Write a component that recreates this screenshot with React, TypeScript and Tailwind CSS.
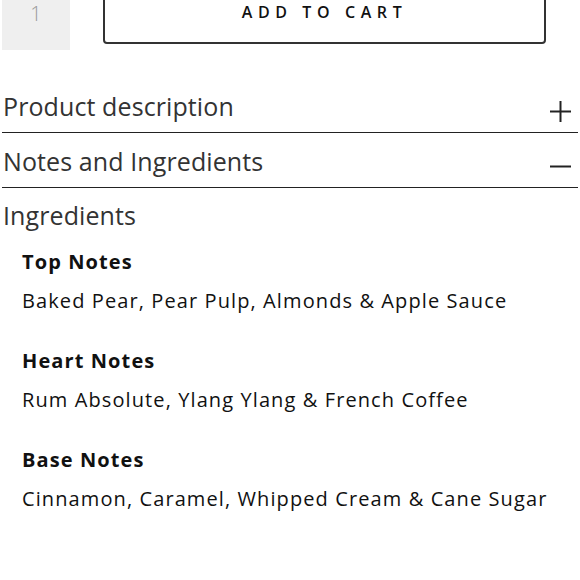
import React from 'react';

const notes = [
  { title: 'Top Notes', text: 'Baked Pear, Pear Pulp, Almonds & Apple Sauce' },
  { title: 'Heart Notes', text: 'Rum Absolute, Ylang Ylang & French Coffee' },
  { title: 'Base Notes', text: 'Cinnamon, Caramel, Whipped Cream & Cane Sugar' },
];

function Plus() {
  return (
    <svg width="21" height="21" viewBox="0 0 21 21" fill="none" stroke="#222" strokeWidth="2">
      <line x1="0" y1="10.5" x2="21" y2="10.5" />
      <line x1="10.5" y1="0" x2="10.5" y2="21" />
    </svg>
  );
}

function Minus() {
  return (
    <svg width="21" height="21" viewBox="0 0 21 21" fill="none" stroke="#222" strokeWidth="2">
      <line x1="0" y1="10.5" x2="21" y2="10.5" />
    </svg>
  );
}

export default function App() {
  return (
    <div
      className="w-[580px] h-[580px] overflow-hidden bg-white"
      style={{ fontFamily: '"Open Sans", "Liberation Sans", sans-serif' }}
    >
      {/* Quantity + cart (page scrolled, button top is off-screen) */}
      <div className="flex items-start pl-[2px]">
        <div className="w-[68px] h-[50px] pt-[4px] bg-[#efefef] flex justify-center text-[20px] leading-[20px] text-[#999] font-light">
          1
        </div>
        <button className="ml-[33px] -mt-[20px] w-[443px] h-[64px] border-2 border-[#333] rounded-[4px] bg-white text-[16px] font-semibold tracking-[5.6px] text-[#111]">
          ADD TO CART
        </button>
      </div>

      {/* Accordion */}
      <div className="mt-[28px] mx-[2px] text-[#333]">
        <div className="h-[55px] flex items-end justify-between pb-[10px] pl-px pr-[7px] border-b-[1.5px] border-[#222]">
          <span className="text-[25px] leading-[32px] tracking-[0.1px]">Product description</span>
          <Plus />
        </div>
        <div className="h-[55px] flex items-end justify-between pb-[10px] pl-px pr-[7px] border-b-[1.5px] border-[#222]">
          <span className="text-[25px] leading-[32px] tracking-[0.1px]">Notes and Ingredients</span>
          <Minus />
        </div>

        <div className="pt-[11px] pl-px">
          <h3 className="text-[25px] leading-[32px] tracking-[0.1px]">Ingredients</h3>
          <div className="mt-[18px] pl-[19px] text-[#111] flex flex-col gap-[34px]">
            {notes.map((n) => (
              <div key={n.title} className="flex flex-col gap-[13px]">
                <p className="text-[20px] leading-[26px] font-bold tracking-[1.1px]">{n.title}</p>
                <p className="text-[20px] leading-[26px] tracking-[1.1px]">{n.text}</p>
              </div>
            ))}
          </div>
        </div>
      </div>
    </div>
  );
}
